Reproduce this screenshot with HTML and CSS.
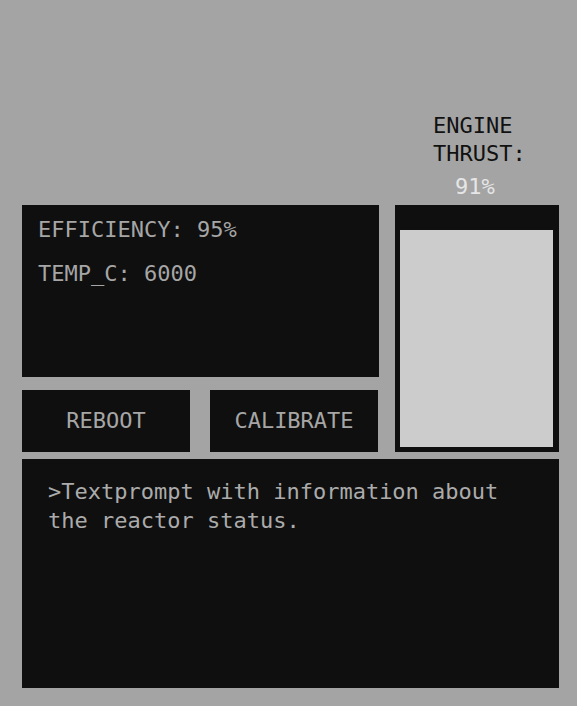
FILE: index.html
```html
<!DOCTYPE html>
<html>
<head>
<meta charset="utf-8">
<link rel="stylesheet" href="styles.css">
</head>
<body>
<div class="console">
  <div class="top">
    <div class="left">
      <div class="stats">
        <div class="stat">EFFICIENCY: 95%</div>
        <div class="stat">TEMP_C: 6000</div>
      </div>
      <div class="buttons">
        <button class="btn">REBOOT</button>
        <button class="btn">CALIBRATE</button>
      </div>
    </div>
    <div class="right">
      <div class="thrust-label">ENGINE<br>THRUST:</div>
      <div class="thrust-value">91%</div>
      <div class="gauge">
        <div class="gauge-fill" style="height:91.6%"></div>
      </div>
    </div>
  </div>
  <div class="prompt">&gt;Textprompt with information about the reactor status.</div>
</div>
</body>
</html>
```
FILE: styles.css
```css
html, body {
  margin: 0;
  padding: 0;
}
body {
  background: #a4a4a4;
  width: 577px;
  height: 706px;
  overflow: hidden;
  font-family: "DejaVu Sans Mono", "Liberation Mono", monospace;
  font-size: 22px;
  line-height: 28px;
}
.console {
  padding: 112px 18px 0 22px;
  display: flex;
  flex-direction: column;
  gap: 7px;
}
.top {
  display: flex;
  gap: 16px;
  align-items: flex-end;
}
.left {
  width: 357px;
  display: flex;
  flex-direction: column;
  gap: 13px;
}
.stats {
  background: #0f0f0f;
  color: #a6a6a6;
  height: 172px;
  box-sizing: border-box;
  padding: 11px 16px;
  display: flex;
  flex-direction: column;
  gap: 16px;
}
.buttons {
  display: flex;
  gap: 20px;
  padding-right: 1px;
}
.btn {
  flex: 1;
  height: 62px;
  background: #0f0f0f;
  color: #a6a6a6;
  border: none;
  margin: 0;
  font: inherit;
  padding: 0;
  cursor: pointer;
}
.right {
  width: 164px;
  display: flex;
  flex-direction: column;
}
.thrust-label {
  color: #111111;
  padding-left: 38px;
}
.thrust-value {
  color: #e6e6e6;
  padding-left: 60px;
  margin-top: 5px;
  margin-bottom: 4px;
}
.gauge {
  background: #0f0f0f;
  height: 247px;
  box-sizing: border-box;
  padding: 5px 6px 5px 5px;
  display: flex;
  flex-direction: column;
  justify-content: flex-end;
}
.gauge-fill {
  background: #cccccc;
}
.prompt {
  background: #0f0f0f;
  color: #ababab;
  height: 229px;
  box-sizing: border-box;
  padding: 18px 26px;
  line-height: 29px;
}
```
